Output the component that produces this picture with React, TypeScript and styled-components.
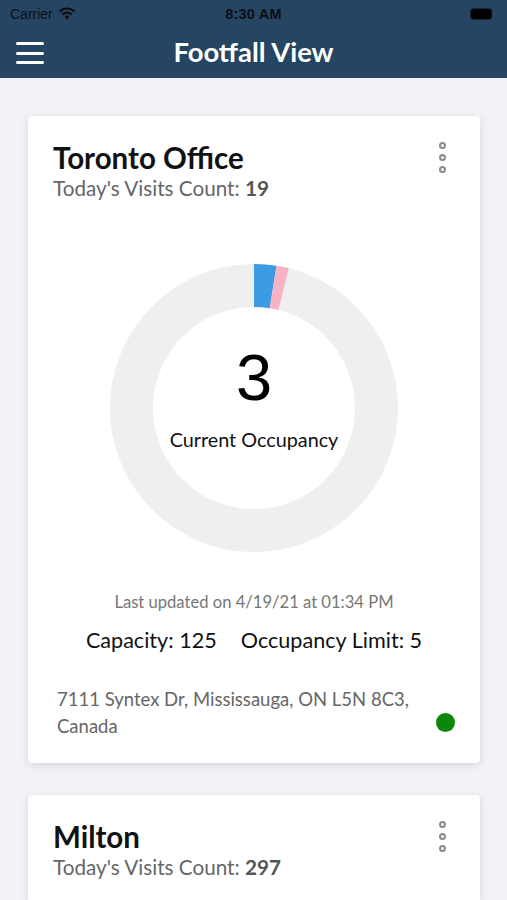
import * as React from "react";
import styled, { createGlobalStyle } from "styled-components";

const GlobalStyle = createGlobalStyle`
  html, body {
    margin: 0;
    padding: 0;
    background: #f2f3f6;
    font-family: Lato, "Open Sans", sans-serif;
  }
`;

const Page = styled.div`
  min-height: 900px;
  background: #f2f3f6;
`;

const Header = styled.header`
  background: #254563;
  height: 78px;
  display: flex;
  flex-direction: column;
`;

const StatusBar = styled.div`
  height: 27px;
  display: grid;
  grid-template-columns: 1fr auto 1fr;
  align-items: center;
  padding: 0 10px;
  color: #0d0f14;
  font-family: "Liberation Sans", Arial, sans-serif;
  font-size: 14px;
`;

const Carrier = styled.div`
  display: flex;
  align-items: center;
  gap: 5px;
`;

const Clock = styled.div`
  font-weight: 700;
  font-size: 14.5px;
  letter-spacing: 0.2px;
`;

const Battery = styled.div`
  justify-self: end;
  display: flex;
  align-items: center;
  margin-right: 2px;
`;

const NavBar = styled.div`
  flex: 1;
  display: flex;
  align-items: center;
  justify-content: center;
  position: relative;
`;

const MenuButton = styled.button`
  position: absolute;
  left: 16px;
  top: 15px;
  width: 28px;
  height: 22px;
  padding: 0;
  border: none;
  background: transparent;
  display: flex;
  flex-direction: column;
  justify-content: space-between;
  span {
    display: block;
    height: 3px;
    border-radius: 2px;
    background: #fff;
  }
`;

const Title = styled.h1`
  margin: 0;
  color: #fff;
  font-size: 27.4px;
  font-weight: 700;
  margin-top: -2px;
`;

const List = styled.main`
  padding: 38px 27px 0 28px;
  display: flex;
  flex-direction: column;
  gap: 32px;
`;

const Card = styled.section`
  background: #fff;
  border-radius: 4px;
  box-shadow: 0 2px 8px rgba(0, 0, 0, 0.12);
  padding: 24px 25px 23px 25px;
`;

const CardTop = styled.div`
  display: flex;
  justify-content: space-between;
  align-items: flex-start;
`;

const Name = styled.h2`
  margin: 0;
  font-size: 29.5px;
  line-height: 36px;
  font-weight: 700;
  color: #111;
`;

const Visits = styled.div`
  font-size: 20.7px;
  line-height: 24px;
  color: #666;
  b {
    font-weight: 700;
    color: #555;
  }
`;

const Kebab = styled.div`
  display: flex;
  flex-direction: column;
  gap: 5px;
  margin: 2px 9px 0 0;
  span {
    width: 7px;
    height: 7px;
    box-sizing: border-box;
    border: 2px solid #8a8a8a;
    border-radius: 50%;
  }
`;

const Chart = styled.div`
  position: relative;
  width: 288px;
  height: 288px;
  margin: 64px auto 0;
`;

const ChartCenter = styled.div`
  position: absolute;
  inset: 0;
  display: flex;
  flex-direction: column;
  align-items: center;
  justify-content: center;
`;

const Count = styled.div`
  font-family: "Liberation Sans", Arial, sans-serif;
  font-size: 65px;
  line-height: 64px;
  color: #000;
  margin-top: -19px;
`;

const CountLabel = styled.div`
  font-size: 19.8px;
  color: #111;
  margin-top: 17px;
`;

const Updated = styled.div`
  margin-top: 40px;
  text-align: center;
  font-size: 16.6px;
  line-height: 20px;
  color: #777;
`;

const Stats = styled.div`
  margin-top: 15px;
  display: flex;
  justify-content: center;
  gap: 24px;
  font-size: 21.6px;
  line-height: 26px;
  color: #111;
`;

const Footer = styled.div`
  margin-top: 33px;
  display: flex;
  align-items: flex-end;
  justify-content: space-between;
  gap: 16px;
`;

const Address = styled.div`
  padding-left: 4px;
  font-size: 18.5px;
  line-height: 27px;
  color: #666;
  max-width: 375px;
`;

const StatusDot = styled.div<{ $color: string }>`
  flex: none;
  width: 19px;
  height: 19px;
  border-radius: 50%;
  background: ${({ $color }) => $color};
  margin-bottom: 8px;
`;

const Donut = ({ segments }: { segments: { value: number; color: string }[] }) => {
  const r = 122.5;
  const c = 2 * Math.PI * r;
  let offset = 0;
  return (
    <svg width="288" height="288" viewBox="0 0 288 288">
      <circle cx="144" cy="144" r={r} fill="none" stroke="#efefef" strokeWidth="43" />
      <g transform="rotate(-90 144 144)">
        {segments.map((s, i) => {
          const len = (s.value / 360) * c;
          const el = (
            <circle
              key={i}
              cx="144"
              cy="144"
              r={r}
              fill="none"
              stroke={s.color}
              strokeWidth="43"
              strokeDasharray={`${len} ${c - len}`}
              strokeDashoffset={-offset}
            />
          );
          offset += len;
          return el;
        })}
      </g>
    </svg>
  );
};

const Wifi = () => (
  <svg width="18" height="13" viewBox="0 0 18 13">
    <path d="M9 12.5 L6.6 9.8 A3.4 3.4 0 0 1 11.4 9.8 Z" fill="#0d0f14" />
    <path d="M4.4 7.6 A6.5 6.5 0 0 1 13.6 7.6" stroke="#0d0f14" strokeWidth="2.2" fill="none" />
    <path d="M1.5 4.6 A10.6 10.6 0 0 1 16.5 4.6" stroke="#0d0f14" strokeWidth="2.2" fill="none" />
  </svg>
);

const BatteryIcon = () => (
  <svg width="25" height="12" viewBox="0 0 25 12">
    <rect x="0.5" y="0.5" width="21.5" height="11" rx="3" fill="#000" stroke="#1a2a3a" />
    <rect x="23" y="4" width="1.6" height="4" rx="0.8" fill="#3a4f66" />
  </svg>
);

interface Location {
  name: string;
  visits: number;
  occupancy?: number;
  updated?: string;
  capacity?: number;
  limit?: number;
  address?: string;
}

const locations: Location[] = [
  {
    name: "Toronto Office",
    visits: 19,
    occupancy: 3,
    updated: "4/19/21 at 01:34 PM",
    capacity: 125,
    limit: 5,
    address: "7111 Syntex Dr, Mississauga, ON L5N 8C3, Canada",
  },
  { name: "Milton", visits: 297 },
];

const LocationCard = ({ loc }: { loc: Location }) => (
  <Card>
    <CardTop>
      <div>
        <Name>{loc.name}</Name>
        <Visits>
          Today's Visits Count: <b>{loc.visits}</b>
        </Visits>
      </div>
      <Kebab>
        <span />
        <span />
        <span />
      </Kebab>
    </CardTop>
    {loc.occupancy !== undefined && (
      <>
        <Chart>
          <Donut
            segments={[
              { value: 9, color: "#3b9be3" },
              { value: 5, color: "#f7b3c3" },
            ]}
          />
          <ChartCenter>
            <Count>{loc.occupancy}</Count>
            <CountLabel>Current Occupancy</CountLabel>
          </ChartCenter>
        </Chart>
        <Updated>Last updated on {loc.updated}</Updated>
        <Stats>
          <span>Capacity: {loc.capacity}</span>
          <span>Occupancy Limit: {loc.limit}</span>
        </Stats>
        <Footer>
          <Address>{loc.address}</Address>
          <StatusDot $color="#0b870b" />
        </Footer>
      </>
    )}
  </Card>
);

export default function App() {
  return (
    <Page>
      <GlobalStyle />
      <Header>
        <StatusBar>
          <Carrier>
            Carrier <Wifi />
          </Carrier>
          <Clock>8:30 AM</Clock>
          <Battery>
            <BatteryIcon />
          </Battery>
        </StatusBar>
        <NavBar>
          <MenuButton aria-label="menu">
            <span />
            <span />
            <span />
          </MenuButton>
          <Title>Footfall View</Title>
        </NavBar>
      </Header>
      <List>
        {locations.map((l) => (
          <LocationCard key={l.name} loc={l} />
        ))}
      </List>
    </Page>
  );
}
